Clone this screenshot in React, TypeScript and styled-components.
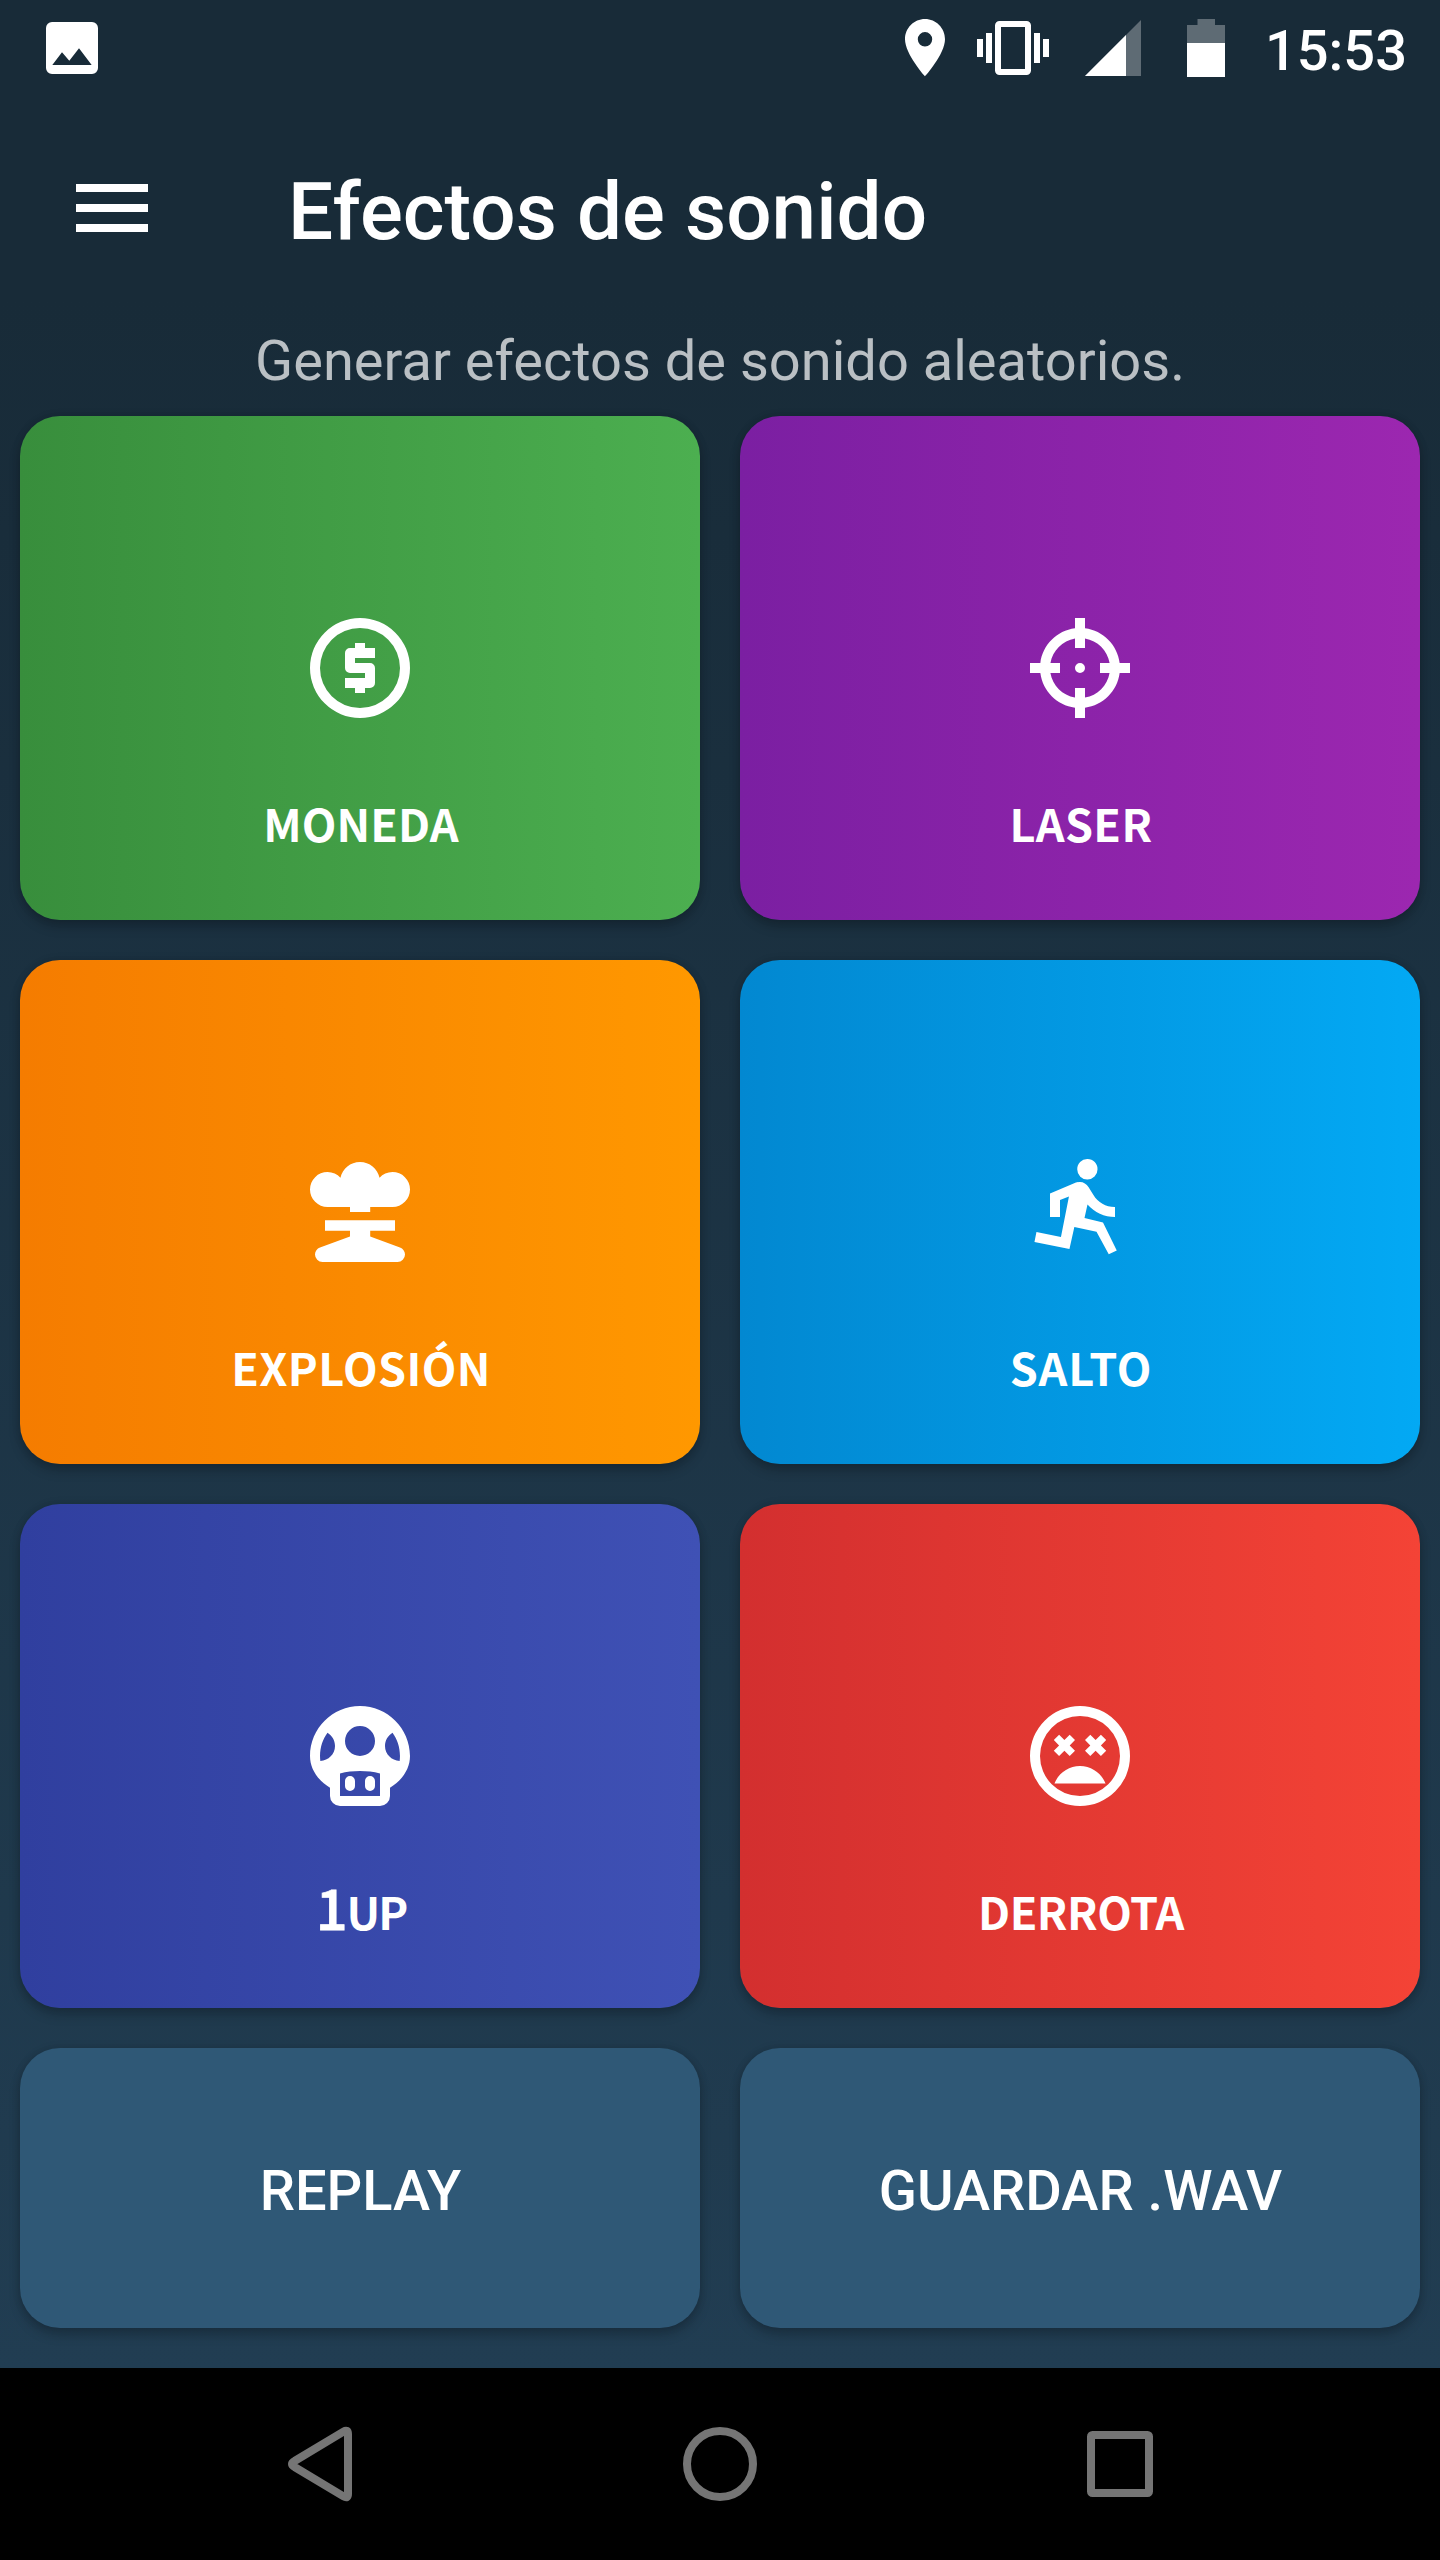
import React from "react";
import styled, { createGlobalStyle } from "styled-components";

const GlobalStyle = createGlobalStyle`
  *, *::before, *::after { box-sizing: border-box; }
  html, body { margin: 0; padding: 0; background: #000; }
  button { border: 0; margin: 0; padding: 0; background: none; color: inherit; font: inherit; }
  svg { display: block; flex: none; }
`;

const Screen = styled.div`
  display: flex;
  flex-direction: column;
  width: 1440px;
  height: 2560px;
  overflow: hidden;
  background: linear-gradient(180deg, #182b38 0, #182b38 300px, #213d52 2368px);
  color: #fff;
  font-family: Roboto, "Noto Sans", sans-serif;
`;

const StatusBar = styled.div`
  display: flex;
  justify-content: space-between;
  height: 96px;
  padding: 0 33px 0 46px;
`;

const StatusIcons = styled.div`
  display: flex;
  align-items: flex-start;
`;

const StatusIcon = styled.svg<{ $gap: number }>`
  height: 96px;
  margin-right: ${(p) => p.$gap}px;
`;

const Clock = styled.time`
  padding-top: 3px;
  font-size: 56px;
  font-weight: 500;
  line-height: 96px;
`;

const AppBar = styled.header`
  display: flex;
  align-items: center;
  height: 224px;
  padding-left: 76px;
`;

const MenuButton = styled.button`
  display: flex;
  flex-direction: column;
  gap: 12px;
  width: 72px;
  margin-right: 140px;
`;

const MenuLine = styled.span`
  height: 8px;
  background: #fff;
`;

const Title = styled.h1`
  margin: 7px 0 0;
  font-size: 80px;
  font-weight: 500;
  line-height: 96px;
  letter-spacing: 0.05px;
  white-space: nowrap;
`;

const Subtitle = styled.p`
  margin: 0 0 14px;
  color: rgba(255, 255, 255, 0.7);
  font-size: 56px;
  line-height: 82px;
  text-align: center;
`;

const Pads = styled.main`
  flex: 1;
  display: grid;
  grid-template-columns: 1fr 1fr;
  grid-template-rows: repeat(3, 504px) 280px;
  gap: 40px;
  padding: 0 20px;
`;

const Card = styled.button`
  display: flex;
  align-items: center;
  border-radius: 40px;
  box-shadow: 0 7px 12px rgba(0, 0, 0, 0.2), 0 0 8px rgba(0, 0, 0, 0.12);
`;

const EffectCard = styled(Card)<{ $from: string; $to: string }>`
  flex-direction: column;
  padding-top: 192px;
  background: linear-gradient(90deg, ${(p) => p.$from}, ${(p) => p.$to});
`;

const EffectLabel = styled.span<{ $tracking: number }>`
  margin-top: 65px;
  padding-left: 2px;
  font-family: "Noto Sans CJK JP", "Noto Sans", sans-serif;
  font-size: 45px;
  font-weight: 700;
  line-height: 60px;
  letter-spacing: ${(p) => p.$tracking}px;
  white-space: nowrap;
`;

const Numeral = styled.span`
  font-size: 56px;
  font-weight: 500;
  line-height: 0;
  letter-spacing: -1px;
  -webkit-text-stroke: 0.8px #fff;
`;

const ActionCard = styled(Card)`
  justify-content: center;
  padding: 5px 0 0 1px;
  background: #2f5876;
  font-size: 56px;
  font-weight: 500;
`;

const NavBar = styled.nav`
  display: grid;
  grid-template-columns: repeat(3, 400px);
  justify-content: center;
  height: 192px;
  background: #000;
`;

const NavButton = styled.button`
  display: flex;
  align-items: center;
  justify-content: center;
`;

const Glyph = ({ d }: { d: string }) => (
  <svg width="120" height="120" viewBox="0 0 24 24" fill="#fff" fillRule="evenodd">
    <path d={d} />
  </svg>
);

const NavGlyph = ({ children }: { children: React.ReactNode }) => (
  <svg width="96" height="96" viewBox="0 0 96 96" fill="none" stroke="#757575" strokeWidth="8">
    {children}
  </svg>
);

const ring = "M12,2A10,10 0 0,1 22,12A10,10 0 0,1 12,22A10,10 0 0,1 2,12A10,10 0 0,1 12,2ZM12,4A8,8 0 0,0 4,12A8,8 0 0,0 12,20A8,8 0 0,0 20,12A8,8 0 0,0 12,4Z";

const icons = {
  coin: `${ring}M11,17V16H9V14H13V13H10A1,1 0 0,1 9,12V9A1,1 0 0,1 10,8H11V7H13V8H15V10H11V11H14A1,1 0 0,1 15,12V15A1,1 0 0,1 14,16H13V17H11Z`,
  crosshair:
    "M11,2V4.07C7.38,4.53 4.53,7.38 4.07,11H2V13H4.07C4.53,16.62 7.38,19.47 11,19.93V22H13V19.93C16.62,19.47 19.47,16.62 19.93,13H22V11H19.93C19.47,7.38 16.62,4.53 13,4.07V2M11,6.08V8H13V6.09C15.5,6.5 17.5,8.5 17.92,11H16V13H17.91C17.5,15.5 15.5,17.5 13,17.92V16H11V17.91C8.5,17.5 6.5,15.5 6.08,13H8V11H6.09C6.5,8.5 8.5,6.5 11,6.08M12,11A1,1 0 0,0 11,12A1,1 0 0,0 12,13A1,1 0 0,0 13,12A1,1 0 0,0 12,11Z",
  nuke: "M14.04,12H10V11H5.5A3.5,3.5 0 0,1 2,7.5A3.5,3.5 0 0,1 5.5,4C6.53,4 7.45,4.44 8.09,5.15C8.5,3.35 10.08,2 12,2C13.92,2 15.5,3.35 15.91,5.15C16.55,4.44 17.47,4 18.5,4A3.5,3.5 0 0,1 22,7.5A3.5,3.5 0 0,1 18.5,11H14.04V12M10,16.9V15.76H5V13.66H19V15.76H14.04V16.92L20,19.08C20.58,19.29 21,19.84 21,20.5A1.5,1.5 0 0,1 19.5,22H4.5A1.5,1.5 0 0,1 3,20.5C3,19.84 3.42,19.29 4,19.08L10,16.9Z",
  run: "M13.5,5.5A2,2 0 0,0 15.5,3.5A2,2 0 0,0 13.5,1.4A2,2 0 0,0 11.45,3.5A2,2 0 0,0 13.5,5.5M9.89,19.38L10.87,15L15.3,15.95L17.75,20.45L19.35,19.7L16.6,14.1L12.9,13.2L13.5,10.5C14.89,12.09 16.89,13 19,13V11C17.24,11.03 15.6,10.11 14.69,8.6L13.69,7C13.34,6.4 12.69,6 12,6C11.69,6 11.5,6.08 11.19,6.08L6,8.28V13H8V9.58L9.79,8.88L8.19,17L3.29,16L2.89,18L9.89,19.38Z",
  mushroom:
    "M12,2C17.5,2 22,6.5 22,12C22,14.6 20.4,16.9 18,18.33V20A2,2 0 0,1 16,22H8A2,2 0 0,1 6,20V18.33C3.6,16.9 2,14.6 2,12C2,6.5 6.5,2 12,2ZM12,6A3,3 0 0,0 9,9A3,3 0 0,0 12,12A3,3 0 0,0 15,9A3,3 0 0,0 12,6ZM8,20H16V15.5C13.4,14.85 10.6,14.85 8,15.5V20ZM10,16A1,1 0 0,1 11,17V18A1,1 0 0,1 9,18V17A1,1 0 0,1 10,16ZM14,16A1,1 0 0,1 15,17V18A1,1 0 0,1 13,18V17A1,1 0 0,1 14,16ZM5.5,7.35C4.4,8.8 3.8,10.9 4.07,13C5.7,12.9 7,11.6 7,10C7,8.9 6.4,7.9 5.5,7.35ZM18.5,7.35C17.6,7.9 17,8.9 17,10C17,11.6 18.3,12.9 19.93,13C20.2,10.9 19.6,8.8 18.5,7.35Z",
  dead: `${ring}M16.18,7.76L15.12,8.82L14.06,7.76L13,8.82L14.06,9.88L13,10.94L14.06,12L15.12,10.94L16.18,12L17.24,10.94L16.18,9.88L17.24,8.82L16.18,7.76M7.82,12L8.88,10.94L9.94,12L11,10.94L9.94,9.88L11,8.82L9.94,7.76L8.88,8.82L7.82,7.76L6.76,8.82L7.82,9.88L6.76,10.94L7.82,12M12,14C9.67,14 7.69,15.46 6.89,17.5H17.11C16.31,15.46 14.33,14 12,14Z`,
};

interface Effect {
  icon: keyof typeof icons;
  numeral?: string;
  label: string;
  from: string;
  to: string;
  tracking: number;
}

const effects: Effect[] = [
  { icon: "coin", label: "MONEDA", from: "#388e3c", to: "#4caf50", tracking: 0.1 },
  { icon: "crosshair", label: "LASER", from: "#7b1fa2", to: "#9c27b0", tracking: 0.4 },
  { icon: "nuke", label: "EXPLOSIÓN", from: "#f57c00", to: "#ff9800", tracking: 0.4 },
  { icon: "run", label: "SALTO", from: "#0288d1", to: "#03a9f4", tracking: 0.9 },
  { icon: "mushroom", numeral: "1", label: "UP", from: "#303f9f", to: "#3f51b5", tracking: -2 },
  { icon: "dead", label: "DERROTA", from: "#d32f2f", to: "#f44336", tracking: -0.5 },
];

export default function App() {
  return (
    <Screen>
      <GlobalStyle />
      <StatusBar>
        <StatusIcon $gap={0} width="52" viewBox="0 0 52 96">
          <path
            fill="#fff"
            fillRule="evenodd"
            d="M6 22H46a6 6 0 0 1 6 6V68a6 6 0 0 1-6 6H6a6 6 0 0 1-6-6V28a6 6 0 0 1 6-6ZM6.3 65H45.7L33 48.2 23.3 60.7 16 52.3Z"
          />
        </StatusIcon>
        <StatusIcons>
          <StatusIcon $gap={32} width="40" viewBox="905 0 40 96">
            <path
              fill="#fff"
              fillRule="evenodd"
              d="M925 19C914 19 905 28 905 39.2 905 54 925 76.3 925 76.3S945 54 945 39.2C945 28 936 19 925 19ZM925 46.5A7.2 7.2 0 1 1 925 32.1 7.2 7.2 0 0 1 925 46.5Z"
            />
          </StatusIcon>
          <StatusIcon $gap={36} width="72" viewBox="977 0 72 96">
            <g fill="#fff">
              <rect x="977" y="39" width="6" height="18" />
              <rect x="986" y="33" width="6" height="30" />
              <rect x="1034" y="33" width="6" height="30" />
              <rect x="1043" y="39" width="6" height="18" />
              <path
                fillRule="evenodd"
                d="M999.5 21H1026.5A4.5 4.5 0 0 1 1031 25.5V70.5A4.5 4.5 0 0 1 1026.5 75H999.5A4.5 4.5 0 0 1 995 70.5V25.5A4.5 4.5 0 0 1 999.5 21ZM1001 27V69H1025V27Z"
              />
            </g>
          </StatusIcon>
          <StatusIcon $gap={46} width="56" viewBox="1085 0 56 96">
            <path fill="#5e6b74" d="M1141 20V76H1085Z" />
            <path fill="#fff" d="M1126 35V76H1085Z" />
          </StatusIcon>
          <StatusIcon $gap={40} width="38" viewBox="1187 0 38 96">
            <path fill="#5e6b74" d="M1197.5 19H1215V25H1225V43H1187V25H1197.5Z" />
            <rect x="1187" y="43" width="38" height="34" fill="#fff" />
          </StatusIcon>
          <Clock>15:53</Clock>
        </StatusIcons>
      </StatusBar>

      <AppBar>
        <MenuButton aria-label="Menu">
          <MenuLine />
          <MenuLine />
          <MenuLine />
        </MenuButton>
        <Title>Efectos de sonido</Title>
      </AppBar>
      <Subtitle>Generar efectos de sonido aleatorios.</Subtitle>

      <Pads>
        {effects.map((e) => (
          <EffectCard key={e.label} $from={e.from} $to={e.to}>
            <Glyph d={icons[e.icon]} />
            <EffectLabel $tracking={e.tracking}>
              {e.numeral && <Numeral>{e.numeral}</Numeral>}
              {e.label}
            </EffectLabel>
          </EffectCard>
        ))}
        <ActionCard>REPLAY</ActionCard>
        <ActionCard>GUARDAR .WAV</ActionCard>
      </Pads>

      <NavBar>
        <NavButton aria-label="Back">
          <NavGlyph>
            <path d="M23 44.8L71.5 15.6Q76 13 76 18V78Q76 83 71.5 80.4L23 51.2Q17 48 23 44.8Z" />
          </NavGlyph>
        </NavButton>
        <NavButton aria-label="Home">
          <NavGlyph>
            <circle cx="48" cy="48" r="33" />
          </NavGlyph>
        </NavButton>
        <NavButton aria-label="Recents">
          <NavGlyph>
            <rect x="19" y="19" width="58" height="58" rx="1.5" />
          </NavGlyph>
        </NavButton>
      </NavBar>
    </Screen>
  );
}
